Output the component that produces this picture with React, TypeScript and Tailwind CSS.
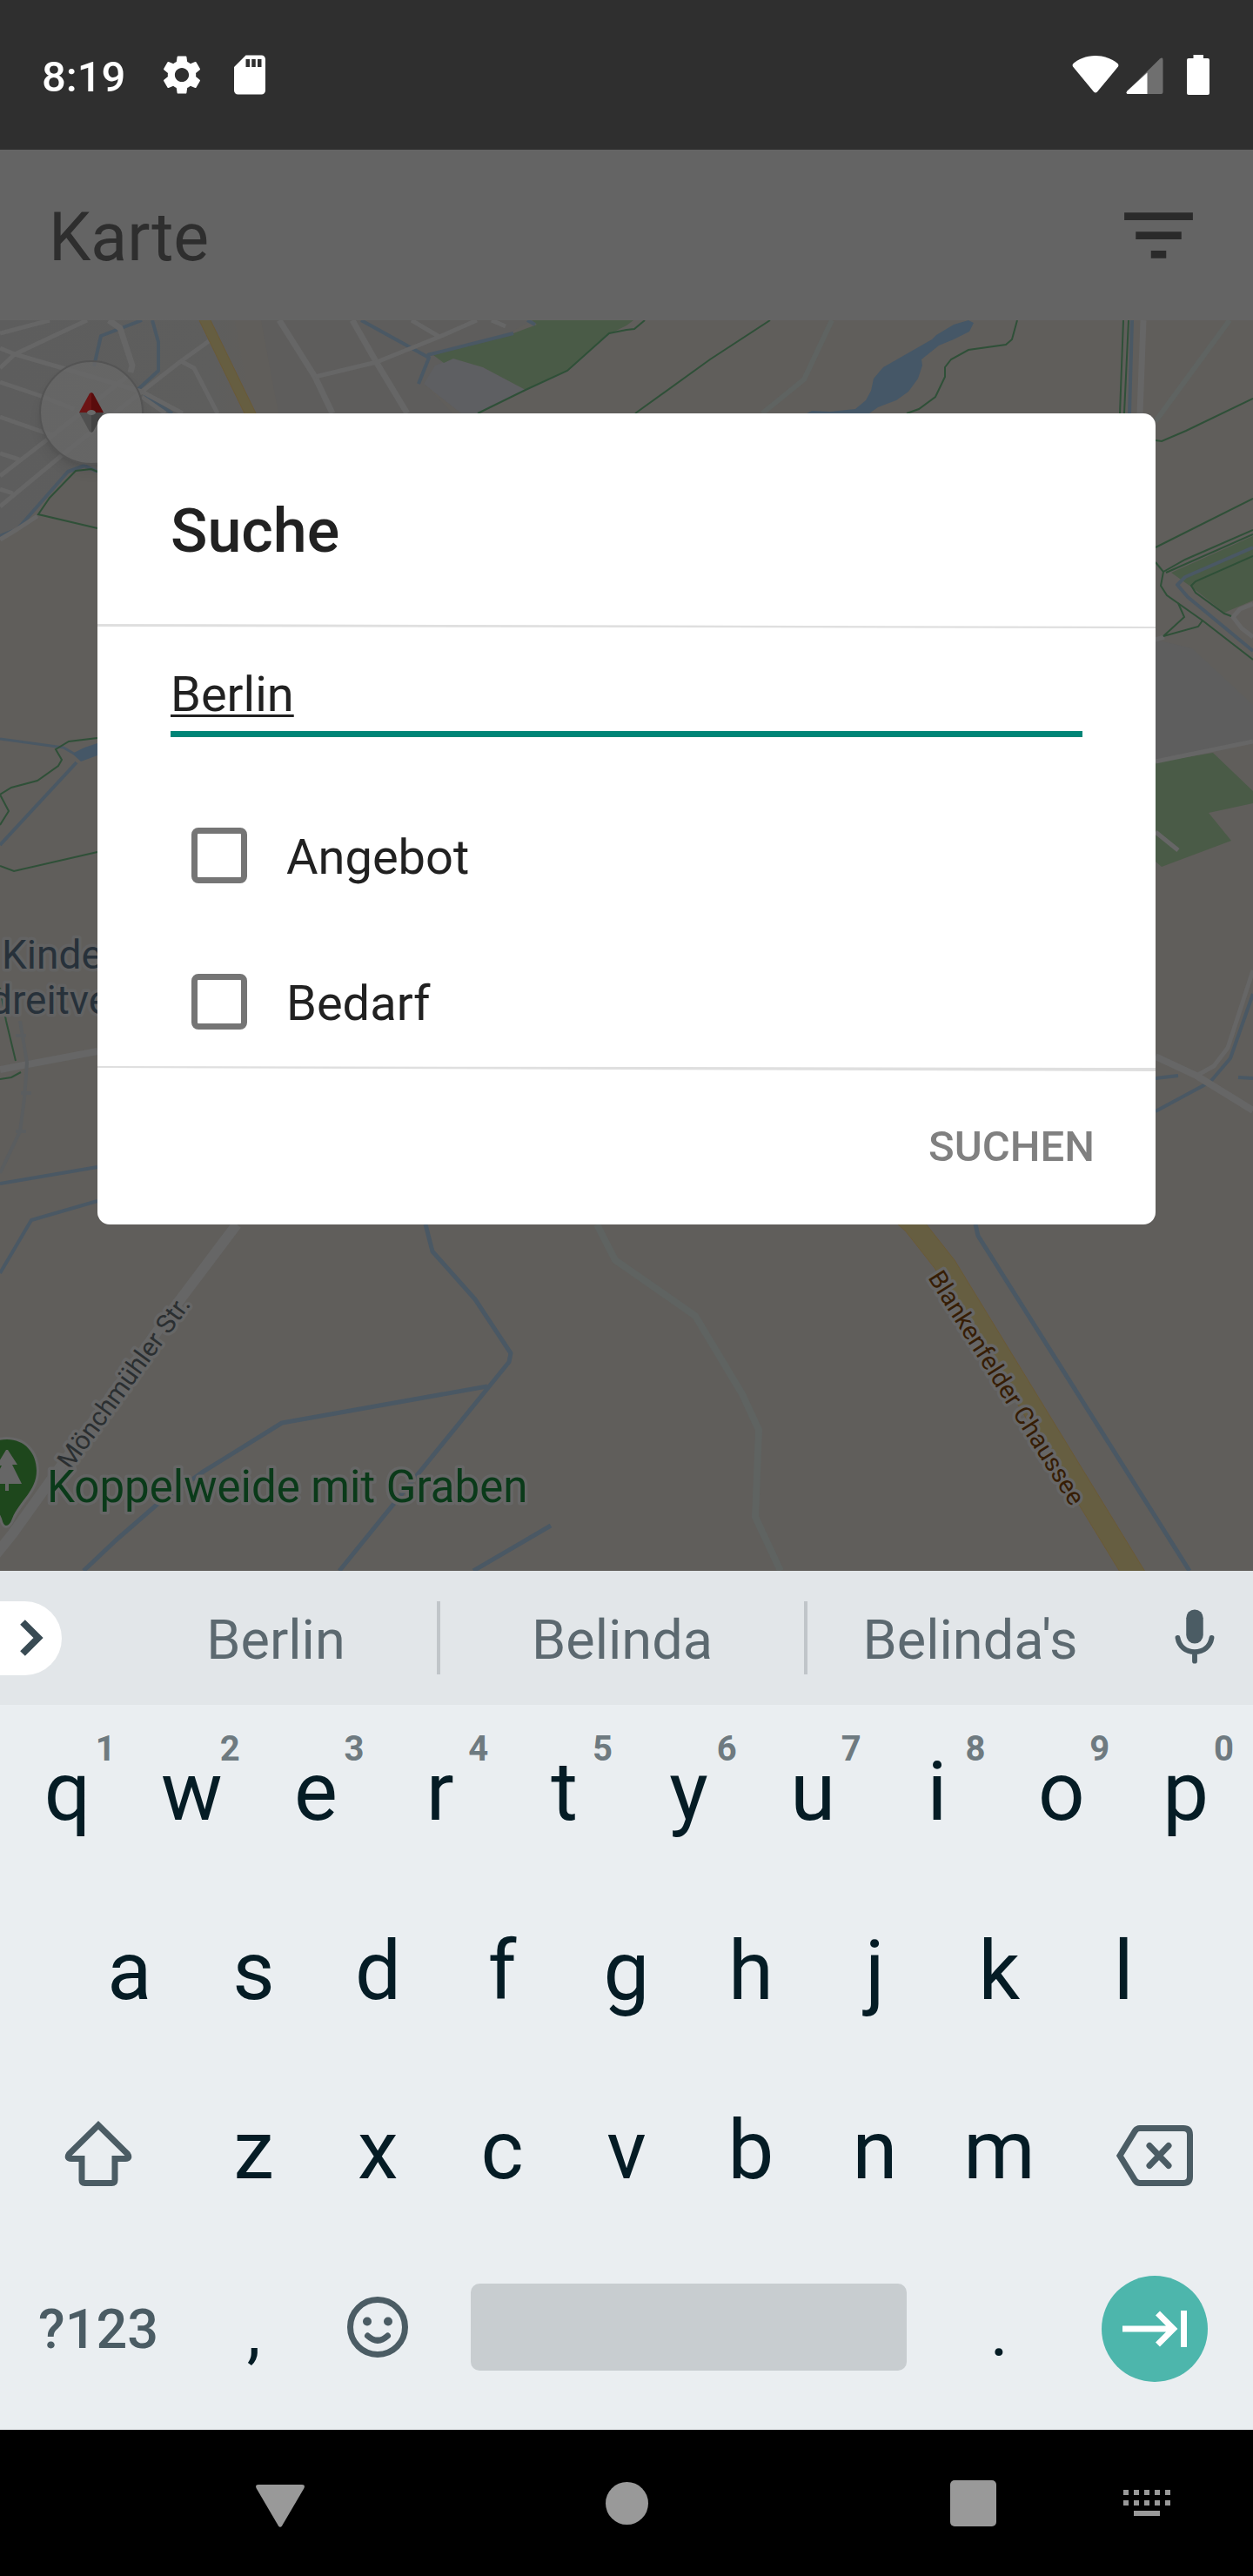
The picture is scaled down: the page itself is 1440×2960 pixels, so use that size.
import React from "react";
import { MdFilterList, MdSdCard, MdSettings } from "react-icons/md";

const HALO = { paintOrder: "stroke", strokeLinejoin: "round" } as const;

function StatusBar() {
  return (
    <header className="flex h-[172px] items-center justify-between bg-[#2f2f2f] pl-12 pr-[50px] text-white">
      <div className="flex items-center">
        <time className="pt-1 text-[49px] font-medium leading-none">8:19</time>
        <MdSettings className="ml-[38px] size-[54px]" />
        <MdSdCard className="ml-6 size-[54px]" />
      </div>
      <div className="flex items-center">
        <svg className="h-[46px] w-[54px]" viewBox="0 0 54 46" fill="currentColor" aria-label="WLAN">
          <path d="M27 1C16 1 7 5 1.500 10Q0 11.500 1 13.500L25 42.500Q27 44.500 29 42.500L53 13.500Q54 11.500 52.500 10C47 5 38 1 27 1Z" />
        </svg>
        <svg className="ml-2 h-[46px] w-[43px]" viewBox="0 0 43 46" aria-label="Mobilfunk">
          <path d="M39 4.500Q42.500 2 42.500 6V43Q42.500 45 40.500 45H3Q-1 45 1.500 41.500Z" fill="#6f6f6f" />
          <path d="M24.500 20.500V45H3Q-1 45 1.500 41.500Z" fill="#fff" />
        </svg>
        <svg className="ml-[27px] h-[46px] w-[26px]" viewBox="0 0 26 46" fill="currentColor" aria-label="Akku">
          <path d="M7.500 0H19V4H24Q26 4 26 6V44Q26 46 24 46H2Q0 46 0 44V6Q0 4 2 4H7.500Z" />
        </svg>
      </div>
    </header>
  );
}

function AppBar() {
  return (
    <div className="flex h-[196px] items-center justify-between bg-[#646464] pl-14 pr-14">
      <h1 className="pt-1.5 text-[77px] leading-none text-[#2e2e2e]">Karte</h1>
      <button type="button" aria-label="Filter" className="text-[#2a2a2a]">
        <MdFilterList className="size-[105px]" />
      </button>
    </div>
  );
}

function MapCanvas() {
  return (
    <svg
      className="absolute inset-0 size-full"
      viewBox="0 368 1440 1437"
      preserveAspectRatio="xMidYMin slice"
      aria-label="Karte"
    >
      <defs>
        <linearGradient id="town" x1="0" x2="1">
          <stop offset="0" stopColor="#5d5d5d" />
          <stop offset="0.85" stopColor="#5e5e5d" />
          <stop offset="1" stopColor="#605e5b" />
        </linearGradient>
      </defs>
      <rect y="368" width="1440" height="1437" fill="#605e5b" />
      <path d="M0 368H270L290 475H112V542L78 542L20 608L0 616Z" fill="url(#town)" />
      <path d="M300 368H611L487 440L520 475H320Z" fill="#5e5d5c" />
      <path d="M1328 735L1370 745L1440 810V852L1328 875Z" fill="#5e5e5e" />
      <path d="M487 441L500 420L521 412L555 422L604 448L549 475H530Z" fill="#5e5f62" />

      <g fill="#4a5b47">
        <path d="M611 368H728L720 374L700 384L652 426L604 448L555 422L521 412L510 417L498 408L590 383L617 373Z" />
        <path d="M1440 616L1346 658L1370 675L1407 704L1440 690Z" />
        <path d="M1328 876L1394 865L1440 909V923L1389 934L1415 966L1335 996L1328 990Z" />
      </g>

      <g fill="#455767">
        <path d="M1113 368L1119 371L1114 381L1096 390L1079 397L1059 413L1060 420L1055 435L1044 450L1030 460L1009 468L999 475H927L933 472L954 473L983 470L995 460L1001 449L1004 435L1015 422L1071 390L1076 385L1096 373Z" />
        <path d="M83 866L97 859L112 854V868L93 875Z" />
      </g>

      <g fill="none" stroke="#4a5864" strokeWidth="4" strokeLinejoin="round">
        <path d="M108 421L116 386L163 368M175 368L182 393V426L158 448M165 454L198 475" />
        <path d="M415 368L493 411L481 441M491 408L590 383M606 368L615 373" />
        <path d="M112 542L97 535L78 542L20 608L0 616" />
        <path d="M0 971L88 876M0 1360L112 1341M0 1463L36 1402L112 1380" />
        <path d="M0 849L73 859L85 866" strokeWidth="3" />
        <path d="M1301 368L1298 475M1440 629L1362 663L1353 672L1365 686L1440 748" />
        <path d="M1440 1142L1414 1216L1391 1243L1328 1277M1328 1239L1354 1236M1423 1238L1440 1239" />
        <path
          strokeWidth="5"
          d="M489 1407L497 1438L546 1493L587 1555L585 1565L390 1805M560 1593L324 1635L232 1692L179 1730L133 1770L96 1805M633 1753L544 1805M1121 1407L1124 1420L1367 1805"
        />
      </g>

      <g fill="none" stroke="#666666" strokeWidth="5" strokeLinejoin="round">
        <path d="M0 383L57 368M0 400L17 407L72 423L163 450M0 423L17 407L100 368" />
        <path d="M0 547L53 506L147 432M0 439L47 455L85 470M0 479L60 500M0 521L22 528M0 562L15 567" />
        <path d="M0 582L70 524L163 450L208 415L240 392" />
        <path d="M208 415L223 423L250 475M163 450L210 475M163 456L190 475" />
        <path d="M125 368L138 377L152 420L150 428" strokeWidth="7" />
        <path d="M321 368L362 433L382 475M405 368L433 417L468 475" strokeWidth="7" />
        <path d="M362 433L433 416L505 387L548 368M473 368L505 387M565 368L581 375" />
        <path d="M0 620L20 608L43 593" />
        <path d="M1314 368L1310 475" strokeWidth="7" />
        <path d="M1440 694L1425 700L1417 709L1427 722L1440 732M1328 735L1338 732" />
        <path d="M1328 875L1440 852M1328 956L1354 977M1440 1115L1411 1204L1395 1225L1375 1236" />
        <path d="M1328 1214L1375 1236L1440 1276M0 1229L112 1208" strokeWidth="8" />
        <path d="M272 1407L202 1500L14 1763L-20 1805" strokeWidth="12" />
      </g>

      <path
        d="M23 1173L31 1221L28 1262L23 1300L0 1348M18 1190H30M24 1256H36M18 1300H30"
        fill="none"
        stroke="#5a5d5f"
        strokeWidth="4"
      />
      <g fill="none" stroke="#5f6361" strokeLinejoin="round">
        <path d="M956 368L924 436L876 475M1413 368L1328 484" strokeWidth="6" />
        <path d="M686 1407L707 1448L720 1457L799 1512L853 1602L872 1643L868 1743L897 1805" strokeWidth="8" />
      </g>

      <g fill="none" stroke="#2f5038" strokeWidth="2">
        <path d="M549 475L604 448L652 426L700 383L720 379L729 378L741 368M730 475L816 413L885 368" />
        <path d="M1169 368L1163 390L1156 396L1113 402L1093 413L1086 422V433L1075 456L1056 470L1042 475" />
        <path d="M1291 368L1287 475M1297 368L1292 475M1328 506L1335 507L1363 495L1440 458M1328 629L1440 573" />
        <path d="M1440 609L1362 643L1337 657M1440 614L1340 658M1328 646L1337 657L1334 673L1341 684L1382 713L1440 758" />
        <path d="M1354 693L1361 709L1337 731L1377 720L1382 713M1440 639L1374 668L1369 673L1374 681L1407 705L1415 708" />
        <path d="M112 542L105 539L87 541L57 572L44 591L112 607" />
        <path d="M112 848L79 852L64 861L71 873L67 880L43 897L13 905L0 913L10 932L0 948M0 995L16 1001L112 979" />
        <path d="M0 1135L7 1173L18 1219M0 1240L13 1238L24 1232" />
      </g>

      <g fill="#665e41" stroke="#6b5a36" strokeWidth="1">
        <path d="M228 366L282 477H295L241 366Z" />
        <path d="M1030 1405L1041 1415L1074 1457L1287 1806H1316L1097 1448L1063 1405Z" />
      </g>

      <g style={HALO} stroke="#666666" strokeWidth="7">
        <text x="2" y="1113" fontSize="46" fill="#27313a" stroke="#636363">Kinder</text>
        <text x="-12" y="1165" fontSize="46" fill="#27313a" stroke="#636363">dreitverein</text>
        <text transform="translate(81 1690) rotate(-54)" fontSize="30" fill="#2b2f31">Mönchmühler Str.</text>
        <text transform="translate(1066 1468) rotate(58)" fontSize="29" fill="#361d05">Blankenfelder Chaussee</text>
        <path
          d="M8 1654C28 1654 42 1669 42 1690C42 1713 22 1725 14 1745Q11 1753 7 1753Q4 1753 2 1745C-6 1725 -26 1713 -26 1690C-26 1669 -12 1654 8 1654Z"
          fill="#1e471c"
          strokeWidth="6"
        />
        <text x="54" y="1726" fontSize="51" fill="#0a3a19">Koppelweide mit Graben</text>
      </g>
      <path d="M7 1666H9L20 1683H14L25 1705H10V1713H6V1705H-9L2 1684H-4Z" fill="#666666" />
    </svg>
  );
}

function Compass() {
  return (
    <button
      type="button"
      aria-label="Kompass"
      className="absolute left-[45px] top-[46px] flex size-[120px] items-center justify-center rounded-full border-2 border-[#545454] bg-[#686868]/80 shadow-lg"
    >
      <svg className="h-[46px] w-[28px]" viewBox="0 0 28 46">
        <path d="M14 0V23H0L12 1Z" fill="#6c1414" />
        <path d="M14 0L16 1L28 23H14Z" fill="#5a0c0c" />
        <path d="M0 23H14V46L12 45Z" fill="#505050" />
        <path d="M28 23H14V46L16 45Z" fill="#444444" />
        <ellipse cx="14" cy="23" rx="5" ry="3" fill="#696969" />
      </svg>
    </button>
  );
}

function Divider({ points }: { points: string }) {
  return (
    <svg className="block h-1.5 w-full" viewBox="0 0 1216 6" preserveAspectRatio="none" aria-hidden="true">
      <polygon points={points} fill="#dfdfdf" />
    </svg>
  );
}

function CheckRow({ id, label }: { id: string; label: string }) {
  return (
    <div className="flex h-[148px] items-center gap-[45px] pl-6">
      <input
        id={id}
        type="checkbox"
        className="size-16 appearance-none rounded-[8px] border-[7px] border-[#757575] bg-white checked:bg-[#008577]"
      />
      <label htmlFor={id} className="pt-1 text-[56px] leading-none text-[#212121]">
        {label}
      </label>
    </div>
  );
}

function SearchDialog() {
  return (
    <form
      role="dialog"
      aria-labelledby="dialog-title"
      onSubmit={(e) => e.preventDefault()}
      className="relative rounded-[14px] bg-white"
    >
      <h2 id="dialog-title" className="px-[84px] pb-[65px] pt-[94px] text-[70px] font-medium leading-[82px] text-[#212121]">
        Suche
      </h2>
      <Divider points="0,1 1216,4 1216,6 0,4" />
      <div className="px-[84px] pt-[43px]">
        <input
          type="text"
          aria-label="Suchbegriff"
          defaultValue="Berlin"
          className="block h-[82px] w-full border-b-[7px] border-[#008577] bg-transparent pb-[9px] text-[56px] text-[#212121] underline decoration-3 underline-offset-4 outline-none"
        />
        <div className="flex flex-col gap-5 pt-[62px]">
          <CheckRow id="angebot" label="Angebot" />
          <CheckRow id="bedarf" label="Bedarf" />
        </div>
      </div>
      <Divider points="0,0 1216,2 1216,6 0,2" />
      <div className="flex h-44 items-center justify-end pb-1 pr-[70px]">
        <button type="submit" className="text-[49px] font-medium leading-none text-[#808080]">
          SUCHEN
        </button>
      </div>
    </form>
  );
}

function SuggestionBar() {
  return (
    <div className="flex h-[154px] items-center bg-[#e2e6e9] text-[63px] text-[#5c6970]">
      <div className="w-[84px] shrink-0">
        <button
          type="button"
          aria-label="Mehr"
          className="flex h-[85px] w-[71px] items-center rounded-r-full bg-white pl-[22px]"
        >
          <svg className="h-[42px] w-[28px]" viewBox="0 0 28 42" fill="none" stroke="#394b54" strokeWidth="8">
            <path d="M4 3L22 21L4 39" />
          </svg>
        </button>
      </div>
      <div className="grid h-[84px] flex-1 grid-cols-3">
        <button type="button" className="border-r-4 border-[#c0c5c9] pl-12 pt-1 leading-none">Berlin</button>
        <button type="button" className="border-r-4 border-[#c0c5c9] pt-1 leading-none">Belinda</button>
        <button type="button" className="pr-12 pt-1 leading-none">Belinda's</button>
      </div>
      <button type="button" aria-label="Spracheingabe" className="flex w-[90px] shrink-0 justify-start text-[#4b5c64]">
        <svg
          className="-ml-4 size-[78px]"
          viewBox="0 0 24 24"
          fill="none"
          stroke="currentColor"
          strokeWidth="1.8"
          strokeLinecap="round"
        >
          <rect x="9" y="2" width="6" height="12" rx="3" fill="currentColor" stroke="none" />
          <path d="M6 12C6.500 15 8.800 17 12 17C15.200 17 17.500 15 18 12M12 17V20.200" />
        </svg>
      </button>
    </div>
  );
}

function Key({ char, hint }: { char: string; hint?: string }) {
  return (
    <button
      type="button"
      className="relative flex h-full flex-1 items-center justify-center pb-1.5 text-[94px] leading-none text-[#051c25]"
    >
      {char}
      {hint && (
        <span className="absolute right-4 top-[31px] text-[40px] font-bold leading-none text-[#6e7a80]">{hint}</span>
      )}
    </button>
  );
}

const ROW_ONE = ["q", "w", "e", "r", "t", "y", "u", "i", "o", "p"];
const ROW_TWO = ["a", "s", "d", "f", "g", "h", "j", "k", "l"];
const ROW_THREE = ["z", "x", "c", "v", "b", "n", "m"];

function Keyboard() {
  return (
    <section aria-label="Tastatur">
      <SuggestionBar />
      <div className="bg-[#eaeef1] px-1.5 pb-[21px] text-[#4b5c64]">
        <div className="flex h-[206px]">
          {ROW_ONE.map((c, i) => (
            <Key key={c} char={c} hint={String((i + 1) % 10)} />
          ))}
        </div>
        <div className="flex h-[206px] px-[5%]">
          {ROW_TWO.map((c) => (
            <Key key={c} char={c} />
          ))}
        </div>
        <div className="flex h-[206px]">
          <button type="button" aria-label="Umschalt" className="flex w-[15%] items-center justify-center">
            <svg className="h-[75px] w-[78px]" viewBox="0 0 78 75" fill="none" stroke="currentColor" strokeWidth="7">
              <path d="M39 5L5.500 38Q2 43.500 8 43.500H20V68Q20 71.500 23.500 71.500H54.500Q58 71.500 58 68V43.500H70Q76 43.500 72.500 38Z" />
            </svg>
          </button>
          {ROW_THREE.map((c) => (
            <Key key={c} char={c} />
          ))}
          <button type="button" aria-label="Löschen" className="flex w-[15%] items-center justify-center pt-1.5">
            <svg className="h-[70px] w-[88px]" viewBox="0 0 88 70" fill="none" stroke="currentColor" strokeWidth="7">
              <path d="M4 35L21.500 6.500Q23.500 3.500 27 3.500H77Q84.500 3.500 84.500 11V59Q84.500 66.500 77 66.500H27Q23.500 66.500 21.500 63.500Z" />
              <path d="M38 23.500L60 46.500M60 23.500L38 46.500" strokeLinecap="round" />
            </svg>
          </button>
        </div>
        <div className="flex h-[194px]">
          <button type="button" className="w-[15%] pt-1 text-[63px] font-medium leading-none">?123</button>
          <button type="button" className="w-[10%] pt-3 text-[80px] leading-none text-[#051c25]">,</button>
          <button type="button" aria-label="Emoji" className="flex w-[10%] items-center justify-center">
            <svg className="size-[70px]" viewBox="0 0 70 70" fill="none" stroke="currentColor" strokeWidth="7">
              <circle cx="35" cy="35" r="31.500" />
              <path d="M23.500 45Q35 55.500 46.500 45" strokeLinecap="round" />
              <circle cx="23" cy="28.500" r="5" fill="currentColor" stroke="none" />
              <circle cx="47" cy="28.500" r="5" fill="currentColor" stroke="none" />
            </svg>
          </button>
          <div className="flex flex-1 items-center px-[35px]">
            <button type="button" aria-label="Leertaste" className="h-[100px] w-full rounded-[10px] bg-[#c8cdd0]" />
          </div>
          <button type="button" className="w-[10%] pt-3 text-[80px] leading-none text-[#051c25]">.</button>
          <div className="flex w-[15%] items-center justify-center pt-1">
            <button
              type="button"
              aria-label="Weiter"
              className="flex size-[122px] items-center justify-center rounded-full bg-[#4db6ac]"
            >
              <svg className="h-[42px] w-[74px]" viewBox="0 0 74 42" fill="none" stroke="#fff" strokeWidth="7">
                <path d="M0 21H57M40.500 3L58.500 21L40.500 39M70.500 0V42" />
              </svg>
            </button>
          </div>
        </div>
      </div>
    </section>
  );
}

function NavBar() {
  return (
    <nav className="grid h-[168px] grid-cols-[222fr_200fr_198fr_200fr_198fr_200fr_200fr_22fr] items-center justify-items-center bg-black text-[#999999]">
      <button type="button" aria-label="Zurück" className="col-start-2 pt-1.5">
        <svg className="h-[49px] w-[56px]" viewBox="0 0 56 49" fill="currentColor">
          <path d="M3 0H53Q57 0 55.500 4L30 47.500Q28 50 26 47.500L0.500 4Q-1 0 3 0Z" />
        </svg>
      </button>
      <button type="button" aria-label="Startseite" className="col-start-4 size-[49px] rounded-full bg-[#999999]" />
      <button type="button" aria-label="Übersicht" className="col-start-6 size-[53px] rounded-[5px] bg-[#999999]" />
      <button type="button" aria-label="Tastatur wechseln" className="col-start-7">
        <svg className="h-[30px] w-[54px]" viewBox="0 0 54 30" fill="currentColor">
          {[0, 12, 24, 36, 48].map((x) => (
            <path key={x} d={`M${x} 0h6v6h-6zM${x} 12h6v6h-6z`} />
          ))}
          <path d="M12 24H42V30H12Z" />
        </svg>
      </button>
    </nav>
  );
}

export default function App() {
  return (
    <div className="flex min-h-screen flex-col font-[Roboto,sans-serif]">
      <StatusBar />
      <AppBar />
      <main className="relative flex-1 overflow-hidden px-28 pb-[398px] pt-[107px]">
        <MapCanvas />
        <Compass />
        <SearchDialog />
      </main>
      <Keyboard />
      <NavBar />
    </div>
  );
}
